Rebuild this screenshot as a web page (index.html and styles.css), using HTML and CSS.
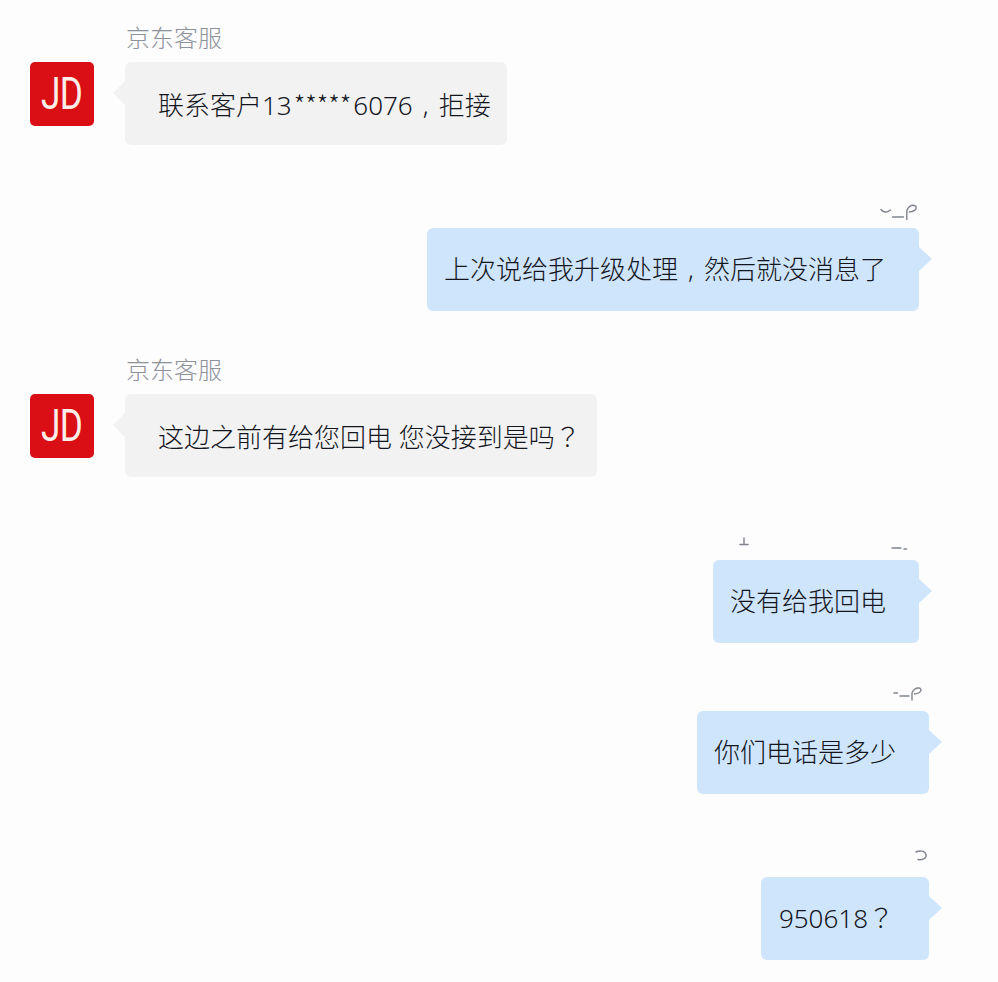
FILE: index.html
```html
<!DOCTYPE html>
<html lang="zh-CN">
<head>
<meta charset="utf-8">
<title>京东客服</title>
<link rel="stylesheet" href="styles.css">
</head>
<body>
<main class="chat">
  <section class="msg-in">
    <div class="name">京东客服</div>
    <div class="avatar"><span class="logo">JD</span></div>
    <div class="bubble bubble-in">联系客户13<span class="stars">*****</span>6076<span class="comma">,</span>拒接</div>
  </section>

  <section class="msg-out">
    <svg class="mark" viewBox="0 0 60 30"><path d="M12 11.500c2 3 6 3.500 9.500.5M23.500 19h11M37.800 21.500v-8.500c1-4 4.500-6.500 7.500-5.500 3.500 1.200 2.500 5.500-5 6.500"/></svg>
    <div class="bubble bubble-out narrow-right">上次说给我升级处理<span class="comma">,</span>然后就没消息了</div>
  </section>

  <section class="msg-in">
    <div class="name">京东客服</div>
    <div class="avatar"><span class="logo">JD</span></div>
    <div class="bubble bubble-in">这边之前有给您回电 您没接到是吗<span class="tc" lang="zh-TW">？</span></div>
  </section>

  <section class="msg-out">
    <svg class="mark mark-wide" viewBox="0 0 200 30"><path d="M15 8v6M11 14.500h8M163 18h9M175 19h2.500"/></svg>
    <div class="bubble bubble-out narrow-right">没有给我回电</div>
  </section>

  <section class="msg-out msg-close">
    <svg class="mark" viewBox="0 0 60 30"><path d="M25 12h3.500M31 15h9M43 19v-7c1-3 4-5.500 7-5 3.500 1 2.500 5-4.500 6"/></svg>
    <div class="bubble bubble-out">你们电话是多少</div>
  </section>

  <section class="msg-out">
    <svg class="mark" viewBox="0 0 60 30"><path d="M47 5c4-2 9-1 10 2.500 1 3.500-3 6-8 5"/></svg>
    <div class="bubble bubble-out bubble-number">950618<span class="tc" lang="zh-TW">？</span></div>
  </section>
</main>
</body>
</html>
```

FILE: styles.css
```css
* {
  box-sizing: border-box;
}

html,
body {
  margin: 0;
  background: #fdfdfe;
}

.chat {
  padding-top: 26px;
  font-family: "Noto Sans", "Noto Sans CJK SC", sans-serif;
  font-weight: 300;
  font-size: 26px;
  color: #14161d;
}

.msg-in {
  display: grid;
  grid-template-columns: 64px max-content;
  column-gap: 31px;
  row-gap: 12px;
  padding-left: 30px;
  margin-bottom: 53px;
}

.name {
  grid-column: 2;
  padding-left: 1px;
  font-size: 24px;
  line-height: 24px;
  color: #8d9199;
}

.avatar {
  grid-column: 1;
  display: flex;
  align-items: center;
  justify-content: center;
  width: 64px;
  height: 64px;
  border-radius: 5px;
  background: #d90f15;
  color: #fdeeea;
}

.logo {
  display: block;
  font-family: "Roboto", sans-serif;
  font-weight: 400;
  font-size: 44px;
  line-height: 44px;
  letter-spacing: -1px;
  transform: scaleX(0.8);
}

.msg-out {
  display: flex;
  flex-direction: column;
  align-items: flex-end;
  padding-right: 69px;
  margin-bottom: 47px;
}

.msg-close {
  margin-top: -9px;
  margin-bottom: 53px;
}

.mark {
  display: block;
  width: 60px;
  height: 30px;
  fill: none;
  stroke: #7f848d;
  stroke-width: 1.4;
  stroke-linecap: round;
}

.mark-wide {
  width: 200px;
}

.bubble {
  position: relative;
  height: 83px;
  line-height: 83px;
  white-space: nowrap;
  border-radius: 6px;
}

.bubble::after {
  content: "";
  position: absolute;
  top: 19px;
  border-style: solid;
  border-width: 12px 0;
  border-color: transparent;
}

.bubble-in {
  grid-column: 2;
  padding: 0 16px 0 33px;
  background: #f2f2f3;
}

.bubble-in::after {
  right: 100%;
  border-right: 12px solid #f2f2f3;
}

.bubble-out {
  padding: 0 33px 0 17px;
  background: #cfe5fc;
}

.bubble-out::after {
  left: 100%;
  border-left: 13px solid #cfe5fc;
}

.bubble-number {
  padding-left: 18px;
  padding-right: 35px;
  line-height: 79px;
}

.narrow-right {
  margin-right: 10px;
}

.stars {
  margin: 0 2px;
  font-family: "Noto Sans CJK SC", sans-serif;
}

.comma {
  display: inline-block;
  width: 26px;
  text-align: center;
}

.tc {
  font-family: "Noto Sans CJK TC", sans-serif;
}
```
